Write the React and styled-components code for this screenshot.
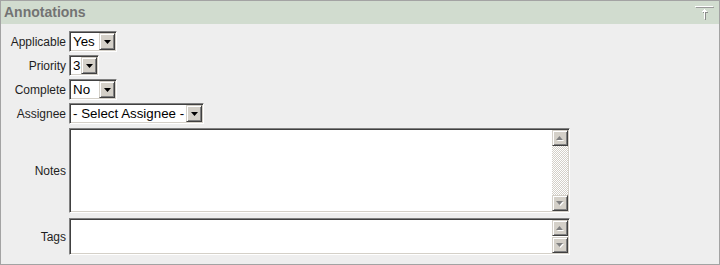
import React from "react";
import styled, { createGlobalStyle } from "styled-components";

const Global = createGlobalStyle`
  html, body { margin: 0; padding: 0; background: #ffffff; }
  body { font-family: "Liberation Sans", Arial, sans-serif; }
`;

const Panel = styled.section`
  width: 720px;
  height: 265px;
  box-sizing: border-box;
  border: 1px solid #a3a3a3;
  background: #eeeeee;
  display: flex;
  flex-direction: column;
`;

const Header = styled.header`
  height: 23px;
  background: #d1dccf;
  display: flex;
  align-items: center;
  justify-content: space-between;
  padding: 0 3px 0 3px;
`;

const Title = styled.h2`
  margin: 0;
  font: bold 14px/23px "Liberation Sans", Arial, sans-serif;
  color: #737373;
`;

const CollapseButton = styled.button`
  border: 0;
  padding: 0;
  background: none;
  width: 21px;
  height: 19px;
  margin-top: -2px;
  display: flex;
  cursor: pointer;
`;

const Form = styled.div`
  display: grid;
  grid-template-columns: 65px auto;
  column-gap: 3px;
  row-gap: 3px;
  justify-content: start;
  align-items: center;
  padding: 7px 0 0 0;
`;

const Label = styled.label`
  font: 12px "Liberation Sans", Arial, sans-serif;
  color: #1e1e1e;
  text-align: right;
  white-space: nowrap;
  margin-top: ${(p) => p.$offset || 0}px;
`;

const Sunken = styled.div`
  box-sizing: border-box;
  border: 1px solid;
  border-color: #808080 #ffffff #ffffff #808080;
  box-shadow: inset 1px 1px 0 #404040, inset -1px -1px 0 #d4d0c8;
  background: #ffffff;
  padding: 1px;
`;

const SelectBox = styled(Sunken)`
  width: ${(p) => p.$w}px;
  height: 21px;
  display: flex;
  align-items: stretch;
`;

const SelectValue = styled.span`
  flex: 1;
  font: 13.33px/17px "Liberation Sans", Arial, sans-serif;
  color: #000000;
  padding-left: 2px;
  white-space: nowrap;
  overflow: hidden;
`;

const Raised = styled.span`
  box-sizing: border-box;
  width: 16px;
  height: ${(p) => (p.$fill ? "auto" : "16px")};
  background: #d4d0c8;
  border: 1px solid;
  border-color: #d4d0c8 #404040 #404040 #d4d0c8;
  box-shadow: inset 1px 1px 0 #ffffff, inset -1px -1px 0 #808080;
  display: flex;
  align-items: center;
  justify-content: center;
  flex: none;
`;

const Arrow = ({ up, color = "#000" }) => (
  <svg width="7" height="4" viewBox="0 0 7 4" style={{ display: "block" }}>
    {up ? (
      <path d="M3.5 0 L7 4 L0 4 Z" fill={color} />
    ) : (
      <path d="M0 0 L7 0 L3.5 4 Z" fill={color} />
    )}
  </svg>
);

const Select = ({ value, width }) => (
  <SelectBox $w={width}>
    <SelectValue>{value}</SelectValue>
    <Raised $fill>
      <Arrow />
    </Raised>
  </SelectBox>
);

const AreaBox = styled(Sunken)`
  width: 501px;
  height: ${(p) => p.$h}px;
  display: flex;
  margin-top: ${(p) => p.$offset}px;
`;

const TextArea = styled.textarea`
  flex: 1;
  border: 0;
  outline: none;
  resize: none;
  margin: 0;
  padding: 0;
  background: #ffffff;
  font: 13px "Liberation Sans", Arial, sans-serif;
`;

const ScrollBar = styled.div`
  width: 16px;
  display: flex;
  flex-direction: column;
  justify-content: space-between;
  background: ${(p) =>
    p.$track
      ? "repeating-conic-gradient(#d4d0c8 0 25%, #ffffff 0 50%) 0 0 / 2px 2px"
      : "#ffffff"};
`;

const DisabledArrow = ({ up }) => (
  <svg width="8" height="5" viewBox="0 0 8 5" style={{ display: "block" }}>
    <path
      d={up ? "M4.5 1 L8 5 L1 5 Z" : "M1 1 L8 1 L4.5 5 Z"}
      fill="#ffffff"
    />
    <path d={up ? "M3.5 0 L7 4 L0 4 Z" : "M0 0 L7 0 L3.5 4 Z"} fill="#808080" />
  </svg>
);

const Area = ({ height, track, offset }) => (
  <AreaBox $h={height} $offset={offset}>
    <TextArea />
    <ScrollBar $track={track}>
      <Raised>
        <DisabledArrow up />
      </Raised>
      <Raised>
        <DisabledArrow />
      </Raised>
    </ScrollBar>
  </AreaBox>
);

const CollapseIcon = () => (
  <svg width="21" height="19" viewBox="0 0 21 19">
    <rect x="1" y="5" width="18" height="1" fill="#9a9a9a" />
    <rect x="0" y="4" width="18" height="1" fill="#ffffff" />
    <g fill="#8a8a8a" transform="translate(1,1)">
      <rect x="9" y="7" width="1" height="1" />
      <rect x="8" y="8" width="3" height="1" />
      <rect x="7" y="9" width="5" height="1" />
      <rect x="9" y="10" width="1" height="7" />
    </g>
    <g fill="#ffffff">
      <rect x="9" y="7" width="1" height="1" />
      <rect x="8" y="8" width="3" height="1" />
      <rect x="7" y="9" width="5" height="1" />
      <rect x="9" y="10" width="1" height="7" />
    </g>
  </svg>
);

export default function App() {
  return (
    <>
      <Global />
      <Panel>
        <Header>
          <Title>Annotations</Title>
          <CollapseButton aria-label="Collapse">
            <CollapseIcon />
          </CollapseButton>
        </Header>
        <Form>
          <Label>Applicable</Label>
          <Select value="Yes" width={48} />
          <Label>Priority</Label>
          <Select value="3" width={30} />
          <Label>Complete</Label>
          <Select value="No" width={48} />
          <Label>Assignee</Label>
          <Select value="- Select Assignee -" width={135} />
          <Label $offset={1}>Notes</Label>
          <Area height={85} track offset={1} />
          <Label $offset={2}>Tags</Label>
          <Area height={37} offset={2} />
        </Form>
      </Panel>
    </>
  );
}
